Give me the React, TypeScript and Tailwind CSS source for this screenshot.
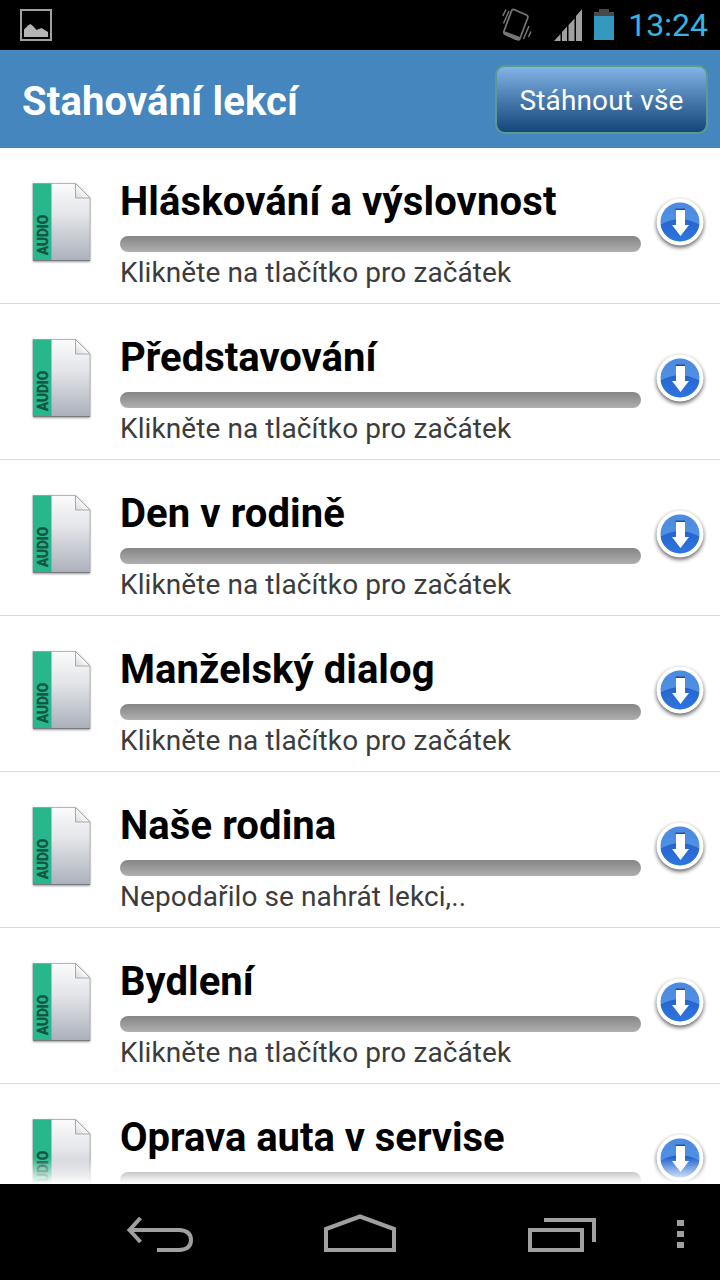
const START = "Klikněte na tlačítko pro začátek";

const LESSONS = [
  { title: "Hláskování a výslovnost", status: START, tracking: "tracking-[0.13px]" },
  { title: "Představování", status: START, tracking: "tracking-[0px]" },
  { title: "Den v rodině", status: START, tracking: "tracking-[0.08px]" },
  { title: "Manželský dialog", status: START, tracking: "tracking-[0.06px]" },
  { title: "Naše rodina", status: "Nepodařilo se nahrát lekci,..", tracking: "tracking-[0.1px]" },
  { title: "Bydlení", status: START, tracking: "tracking-[0.05px]" },
  { title: "Oprava auta v servise", status: "", tracking: "tracking-[-0.04px]" },
];

function StatusBar() {
  return (
    <div className="flex h-[50px] shrink-0 items-center bg-black pl-5 pr-3">
      <svg width="32" height="32" viewBox="0 0 32 32">
        <rect x="1" y="1" width="30" height="30" fill="none" stroke="#a0a0a0" strokeWidth="2" />
        <path d="M4 28v-7.500l4-4 2.500-1.500 3 2.500 3 3.500 5-2 6.500 4v5z" fill="#b4b4b4" />
      </svg>
      <div className="ml-auto flex items-center">
        {/* Vibrate */}
        <svg width="30" height="34" viewBox="0 0 30 34" fill="none">
          <path d="M12 1.500 24.500 7q2 1 1.200 3L18 30.500q-1 2-3 1L3 26q-1.800-1-1-3L9.500 3q1-2.200 2.500-1.500Z" stroke="#777" strokeWidth="1.700" />
          <path d="M1.800 23 18 29 16.500 32 13.500 32 1.800 26.500Z" fill="#777" />
          <path d="M1.500 15.500 7 3M.8 8 4 1.500M21.500 31 27 18M26.500 29 29 23.500" stroke="#777" strokeWidth="1.500" />
        </svg>
        {/* Signal */}
        <svg className="ml-[22px]" width="28" height="32" viewBox="0 0 28 32">
          <path d="M0 32 6.500 25v7zM8 32v-9l5-5.500V32zM14.500 32V16l6-6.500V32zM22 32V7l6-7v32z" fill="#a0a0a0" />
        </svg>
        {/* Battery */}
        <svg className="ml-3" width="20" height="32" viewBox="0 0 20 32">
          <path d="M5 0h10v3h5v4H0V3h5z" fill="#494949" />
          <path d="M0 7h20v24H0z" fill="#3399bf" />
        </svg>
        <span className="ml-[14px] text-[32px] leading-none text-[#33b5e5]">13:24</span>
      </div>
    </div>
  );
}

function AudioFileIcon() {
  return (
    <svg className="mt-[33px] shrink-0" width="64" height="84" viewBox="0 0 64 84">
      <defs>
        <linearGradient id="paper" x1="0" y1="0" x2="0" y2="1">
          <stop offset="0" stopColor="#fbfbfc" />
          <stop offset=".4" stopColor="#e3e5e9" />
          <stop offset="1" stopColor="#abb0ba" />
        </linearGradient>
        <linearGradient id="fold" x1="0" y1="1" x2="1" y2="0">
          <stop offset="0" stopColor="#d6d6d8" />
          <stop offset=".5" stopColor="#fafafa" />
        </linearGradient>
        <filter id="soft" x="-10%" y="-10%" width="120%" height="120%">
          <feGaussianBlur stdDeviation=".8" />
        </filter>
      </defs>
      <path d="M3 3h43l14 14v64H3z" fill="#777" filter="url(#soft)" opacity=".75" />
      <path d="M3 2.500h42.500L60 17v62.500H3z" fill="url(#paper)" stroke="#a5a7aa" strokeWidth=".8" />
      <path d="M3 2.500h18.500v77H3z" fill="#28b78d" />
      <path d="M3 79.500h57" stroke="#777b80" strokeWidth="1.200" />
      <path d="M45.500 2.500V17H60z" fill="url(#fold)" stroke="#aaa" strokeWidth="1" />
      <text
        transform="translate(17.500 74) rotate(-90)"
        textLength="40"
        lengthAdjust="spacingAndGlyphs"
        className="text-[15px] font-bold"
        fill="#12543f"
        stroke="#12543f"
        strokeWidth=".4"
      >
        AUDIO
      </text>
    </svg>
  );
}

function DownloadIcon() {
  return (
    <svg className="mt-[46px] shrink-0" width="56" height="60" viewBox="0 0 56 60">
      <defs>
        <linearGradient id="disc" x1="0" y1="0" x2="0" y2="1">
          <stop offset="0" stopColor="#4b8be0" />
          <stop offset="1" stopColor="#5593e4" />
        </linearGradient>
        <linearGradient id="gloss" x1="0" y1="0" x2="0" y2="1">
          <stop offset="0" stopColor="#2563cc" />
          <stop offset="1" stopColor="#2f76e0" />
        </linearGradient>
        <filter id="drop" x="-20%" y="-20%" width="140%" height="140%">
          <feGaussianBlur stdDeviation="2" />
        </filter>
      </defs>
      <circle cx="28" cy="30" r="23.500" fill="#000" opacity=".65" filter="url(#drop)" />
      <circle cx="28" cy="28" r="23.500" fill="#fff" />
      <circle cx="28" cy="28" r="19.500" fill="url(#disc)" />
      <path d="M8.700 30.500Q28 20 47.300 30.500A19.500 19.500 0 0 1 8.700 30.500Z" fill="url(#gloss)" />
      <path d="M23.500 15.300h9.500" stroke="#1c4f9f" strokeWidth="1.500" />
      <path d="M24 16h9v15h4l-8.500 11L20 31h4z" fill="#fff" />
    </svg>
  );
}

function LessonRow({ title, status, tracking }: (typeof LESSONS)[number]) {
  return (
    <li className="flex h-[156px] shrink-0 border-b border-[#d9d9d9] pl-[30px] pr-3">
      <AudioFileIcon />
      <div className="ml-[26px] w-[521px] pt-[30px]">
        <h2 className={`text-[40px] leading-[48px] font-bold whitespace-nowrap text-black ${tracking}`}>{title}</h2>
        <div className="mt-[10px] h-4 rounded-[8px] bg-linear-to-b from-[#858585] to-[#b0b0b0]" />
        {status && (
          <p className="mt-1 text-[28px] leading-[33px] tracking-[0.09px] whitespace-nowrap text-[#3c3c3c]">{status}</p>
        )}
      </div>
      <div className="ml-[11px]">
        <DownloadIcon />
      </div>
    </li>
  );
}

function NavBar() {
  return (
    <nav className="flex h-24 shrink-0 items-start bg-black pl-[126px] text-[#a0a0a0]">
      <svg className="mt-[33px]" width="68" height="36" viewBox="0 0 68 36" fill="none" stroke="currentColor" strokeWidth="4">
        <path d="M4 13h50q11 1 11 10T54 33H31" />
        <path d="M14.500 1 3.500 13 14.500 25" />
      </svg>
      <svg className="ml-[130px] mt-[30px]" width="72" height="38" viewBox="0 0 72 38" fill="none" stroke="currentColor" strokeWidth="4">
        <path d="M2 36V15L36 2.500l34 12.500v21z" />
      </svg>
      <svg className="ml-[132px] mt-[34px]" width="68" height="34" viewBox="0 0 68 34" fill="none" stroke="currentColor" strokeWidth="4">
        <path d="M16 2h50v22M2 12h52v20H2z" />
      </svg>
      <svg className="ml-[81px] mt-9" width="7" height="30" viewBox="0 0 7 30" fill="currentColor">
        <path d="M0 0h7v6H0zM0 11h7v6H0zM0 22h7v6H0z" />
      </svg>
    </nav>
  );
}

export default function App() {
  return (
    <div className="flex h-[1280px] w-[720px] flex-col overflow-hidden bg-white font-[Roboto,sans-serif]">
      <StatusBar />
      <header className="flex h-[98px] shrink-0 items-center justify-between bg-[#4486bd] pl-[22px] pr-3">
        <h1 className="pt-1.5 text-[40px] leading-[48px] font-bold tracking-[0.15px] whitespace-nowrap text-white">Stahování lekcí</h1>
        <button className="h-[69px] w-[213px] rounded-[10px] border-2 border-[#5b9a91] bg-linear-to-b from-[#82b4e7] to-[#124679] pt-[3px] text-[28px] tracking-[0.15px] whitespace-nowrap text-white">
          Stáhnout vše
        </button>
      </header>
      <main className="relative min-h-0 flex-1 overflow-hidden">
        <ul className="flex flex-col">
          {LESSONS.map((lesson) => (
            <LessonRow key={lesson.title} {...lesson} />
          ))}
        </ul>
        {/* Fading edge of the scrolling list */}
        <div className="absolute inset-x-0 bottom-0 h-[26px] bg-linear-to-b from-white/0 to-white" />
      </main>
      <NavBar />
    </div>
  );
}
